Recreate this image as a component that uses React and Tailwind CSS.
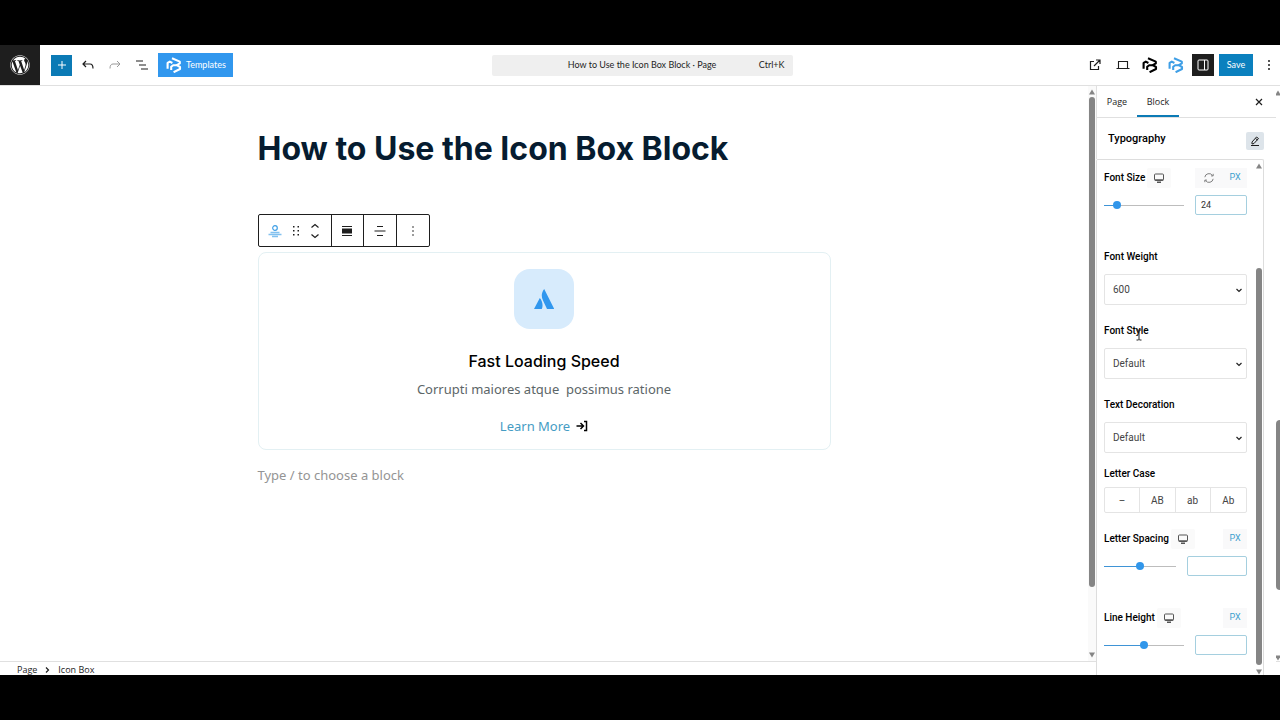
import { FaWordpress } from "react-icons/fa6";

const TriangleUp = () => (
  <svg viewBox="0 0 6 6" className="size-1.5 shrink-0 fill-[#858585]"><path d="M3 0.5 6 5.5H0z" /></svg>
);

const TriangleDown = () => (
  <svg viewBox="0 0 6 6" className="size-1.5 shrink-0 fill-[#858585]"><path d="M3 5.5 6 0.5H0z" /></svg>
);

const BrandLogo = ({ className }) => (
  <svg viewBox="0 0 16 16" className={className} fill="none" stroke="currentColor" strokeWidth="2.1" strokeLinejoin="round">
    <path d="M1.6 11.8V5.8L3.800 4.600 6.400 6" />
    <path d="M5.200 13V9.800L7.200 8.200H10.800" />
    <path d="M6 1.300 13.800 4.600V6.400L10.800 8.200 14 10V12L7.600 15.200" />
  </svg>
);

const DesktopIcon = () => (
  <svg viewBox="0 0 12 12" className="size-3" fill="none" stroke="#555" strokeWidth="1">
    <rect x="1.5" y="2" width="9" height="6.5" rx="1" />
    <path d="M2 8h8M4 10.2h4" strokeWidth="1.5" />
  </svg>
);

const Label = ({ children, htmlFor }) => (
  <label htmlFor={htmlFor} className="block text-[10px] font-medium leading-5 text-black">{children}</label>
);

const SelectField = ({ id, label, options, className }) => (
  <div className={className}>
    <Label htmlFor={id}>{label}</Label>
    <div className="relative mt-[7px]">
      <select id={id} className="block h-[31px] w-full appearance-none rounded-xs border border-[#e4e4e4] bg-white px-2 text-[10px] text-[#444]">
        {options.map((option) => <option key={option}>{option}</option>)}
      </select>
      <svg viewBox="0 0 8 8" className="pointer-events-none absolute right-1 top-3 size-2" fill="none" stroke="#222" strokeWidth="1.2"><path d="m1.5 3 2.5 2.5L6.5 3" /></svg>
    </div>
  </div>
);

const SliderField = ({ id, label, value, percent, reset, inputClass, className }) => (
  <div className={className}>
    <div className="flex h-5 items-center justify-between">
      <div className="flex items-center gap-0.5">
        <Label htmlFor={id}>{label}</Label>
        <button aria-label="Device" className="flex h-5 w-6 items-center justify-center rounded-xs bg-[#fafafa]"><DesktopIcon /></button>
      </div>
      <div className="flex h-5 items-center bg-[#f9f9fa]">
        {reset && (
          <button aria-label="Reset" className="flex w-7 justify-center">
            <svg viewBox="0 0 12 12" className="size-2.5" fill="none" stroke="#666" strokeWidth="1">
              <path d="M1 5a5 5 0 0 1 9-2.2M11 1v2.5H8.5M11 7a5 5 0 0 1-9 2.2M1 11V8.500H3.500" />
            </svg>
          </button>
        )}
        <button className="w-6 text-[9px] text-[#3ba0cf]">PX</button>
      </div>
    </div>
    <div className="mt-[7px] flex items-center gap-[11px]">
      <input
        type="range"
        aria-label={label}
        defaultValue={percent}
        style={{ backgroundImage: `linear-gradient(to right, #3f94d6 ${percent}%, #bdbdbd ${percent}%)` }}
        className="h-px min-w-0 flex-1 appearance-none [&::-webkit-slider-thumb]:size-2 [&::-webkit-slider-thumb]:appearance-none [&::-webkit-slider-thumb]:rounded-full [&::-webkit-slider-thumb]:bg-[#3196ea]"
      />
      <input id={id} defaultValue={value} className={`h-5 rounded-xs border border-[#a5cfdf] bg-white px-[5px] text-[9px] text-[#333] ${inputClass}`} />
    </div>
  </div>
);

const Header = () => (
  <header className="flex h-[41px] shrink-0 items-center justify-between border-b border-[#e0e0e0] font-['Lato',sans-serif]">
    <div className="flex flex-1 items-center">
      <a href="#" aria-label="WordPress" className="flex size-10 items-center justify-center bg-[#1e1e1e] text-white"><FaWordpress className="size-5" /></a>
      <button aria-label="Add block" className="ml-[11px] flex size-[21px] items-center justify-center bg-[#0b7ab5]">
        <svg viewBox="0 0 8 8" className="size-2" stroke="#fff"><path d="M4 0v8M0 4h8" /></svg>
      </button>
      <button aria-label="Undo" className="ml-2.5">
        <svg viewBox="0 0 12 12" className="size-3" fill="none" stroke="#1e1e1e" strokeWidth="1.2"><path d="M4 2 1 5l3 3M1 5h7q3 0 3 4.500" /></svg>
      </button>
      <button aria-label="Redo" className="ml-[15px]">
        <svg viewBox="0 0 12 12" className="size-3" fill="none" stroke="#999" strokeWidth="1"><path d="m8 2 3 3-3 3M11 5H4q-3 0-3 4.500" /></svg>
      </button>
      <button aria-label="Document overview" className="ml-[15px]">
        <svg viewBox="0 0 12 12" className="size-3" stroke="#1e1e1e" strokeWidth="1.2"><path d="M0 2h7M3 6h7M5 10h7" /></svg>
      </button>
      <button className="ml-2.5 flex h-6 w-[75px] items-center gap-1 bg-[#3197ee] pl-2 text-[9px] text-white"><BrandLogo className="size-4" />Templates</button>
    </div>
    <button className="ml-1 grid h-[21px] w-[301px] grid-cols-[1fr_auto_1fr] items-center rounded-xs bg-[#efefef] px-2 text-[9px] text-[#1e1e1e]">
      <span className="col-start-2">How to Use the Icon Box Block · Page</span>
      <span className="text-right">Ctrl+K</span>
    </button>
    <div className="flex flex-1 items-center justify-end">
      <a href="#" aria-label="View page" className="mr-[15px]">
        <svg viewBox="0 0 12 12" className="size-3" fill="none" stroke="#1e1e1e" strokeWidth="1.2"><path d="M5 2.500H1.500v8h8V7M7 1h4v4M11 1 5 7" /></svg>
      </a>
      <button aria-label="Preview" className="mr-3">
        <svg viewBox="0 0 14 12" className="h-3 w-3.5" fill="none" stroke="#1e1e1e" strokeWidth="1.1"><path d="M2.500 9V2.500h9V9M0.500 9.500h13" /></svg>
      </button>
      <button aria-label="Blocks" className="mr-2.5 text-black"><BrandLogo className="size-4" /></button>
      <button aria-label="Library" className="mr-2 text-[#3f9fe6]"><BrandLogo className="size-4" /></button>
      <button aria-label="Settings" className="mr-[5px] flex size-[22px] items-center justify-center bg-[#1e1e1e]">
        <svg viewBox="0 0 12 12" className="size-3" fill="none" stroke="#fff"><rect x="1" y="1" width="10" height="10" rx="1" /><path d="M7.500 1v10" /></svg>
      </button>
      <button className="h-[22px] w-[34px] bg-[#0b80be] text-[9px] text-white">Save</button>
      <button aria-label="Options" className="ml-3.5 mr-[9px]">
        <svg viewBox="0 0 4 12" className="h-3 w-1" fill="#1e1e1e"><circle cx="2" cy="2" r="1" /><circle cx="2" cy="6" r="1" /><circle cx="2" cy="10" r="1" /></svg>
      </button>
    </div>
  </header>
);

const BlockToolbar = () => (
  <div className="flex h-[33px] w-[172px] divide-x divide-[#1e1e1e] rounded-xs border border-[#1e1e1e]">
    <div className="flex w-[73px] items-center justify-between pl-[9px] pr-[11px]">
      <button aria-label="Icon Box">
        <svg viewBox="0 0 14 14" className="size-3.5" fill="none" stroke="#3f9fe6"><circle cx="7" cy="4" r="2.300" strokeWidth="1.200" /><path d="M2.500 8.500h9M0.500 10.500h13M4 12.500h6" strokeWidth="1.400" strokeOpacity=".65" /></svg>
      </button>
      <button aria-label="Drag">
        <svg viewBox="0 0 8 12" className="h-3 w-2" fill="#1e1e1e"><path d="M1 1h1.500v1.500H1zM5.500 1H7v1.500H5.500zM1 5h1.500v1.500H1zM5.500 5H7v1.500H5.500zM1 9h1.500v1.500H1zM5.500 9H7v1.500H5.500z" /></svg>
      </button>
      <button aria-label="Move">
        <svg viewBox="0 0 10 16" className="h-4 w-2.5" fill="none" stroke="#1e1e1e" strokeWidth="1.200"><path d="m1.500 4.500 3.500-3 3.500 3M1.500 11.500l3.500 3 3.500-3" /></svg>
      </button>
    </div>
    <button aria-label="Width" className="flex flex-1 items-center justify-center">
      <svg viewBox="0 0 10 12" className="h-3 w-2.5" fill="#1e1e1e"><path d="M0 1h10v1H0zM0 3.500h10v5H0zM0 10h10v1H0z" /></svg>
    </button>
    <button aria-label="Align" className="flex flex-1 items-center justify-center">
      <svg viewBox="0 0 12 12" className="size-3" fill="#1e1e1e"><path d="M3 1h6v1H3zM0.500 5.500h11v1H0.500zM3 10h6v1H3z" /></svg>
    </button>
    <button aria-label="More" className="flex flex-1 items-center justify-center">
      <svg viewBox="0 0 4 12" className="h-3 w-1" fill="#1e1e1e"><circle cx="2" cy="2" r=".8" /><circle cx="2" cy="6" r=".8" /><circle cx="2" cy="10" r=".8" /></svg>
    </button>
  </div>
);

const Canvas = () => (
  <main className="min-w-0 flex-1 px-6 pt-10 font-['Noto_Sans',sans-serif]">
    <div className="mx-auto w-full max-w-[573px]">
      <h1 className="font-['Inter',sans-serif] text-[32px] font-bold leading-[46px] text-[#061c30]">How to Use the Icon Box Block</h1>
      <div className="mt-[42px]"><BlockToolbar /></div>
      <section className="mt-[5px] flex flex-col items-center rounded-lg border border-[#e3f0f3] pb-[13px] pt-4">
        <div className="flex size-[60px] items-center justify-center rounded-2xl bg-[#d7ebfc]">
          <svg viewBox="0 0 20 20" className="size-5" fill="#3197ee"><path d="M10.200 0C7.500 3.500 7 7.500 9 11.500L13 20h7.200zM5.800 9 0 20h7.800C9.300 16.500 8.500 12 5.800 9z" /></svg>
        </div>
        <h2 className="mt-5 font-['Inter',sans-serif] text-[16px] font-medium leading-6 text-black">Fast Loading Speed</h2>
        <p className="mt-1.5 whitespace-pre text-[13px] leading-5 text-[#5c6668]">Corrupti maiores atque  possimus ratione</p>
        <a href="#" className="mt-[17px] flex items-center gap-1.5 text-[13px] leading-5 text-[#459cc4]">
          Learn More
          <svg viewBox="0 0 12 12" className="size-3" fill="none" stroke="#000" strokeWidth="1.500"><path d="M0.500 6H7M4.500 3l3 3-3 3M8 1.500h2.500v9H8" /></svg>
        </a>
      </section>
      <p className="mt-[15px] text-[13px] leading-5 text-[#949494]">Type / to choose a block</p>
    </div>
  </main>
);

const TypographyPanel = () => (
  <div className="flex min-h-0 w-[168px] flex-1 rounded-t-xs border border-b-0 border-[#ddd] bg-white">
    <div className="min-w-0 flex-1 overflow-hidden pl-[7px] pr-2 pt-2">
      <SliderField id="font-size" label="Font Size" value="24" percent={12} reset inputClass="w-[52px]" />
      <SelectField id="font-weight" label="Font Weight" options={["600", "400", "700"]} className="mt-8" />
      <div className="relative mt-4">
        <SelectField id="font-style" label="Font Style" options={["Default", "Italic"]} />
        <svg viewBox="0 0 6 12" className="pointer-events-none absolute left-8 top-2 h-3 w-1.5" fill="none" stroke="#222"><path d="M0.500 1h2l.5.500.5-.500h2M3 1.500v9M0.500 11h2l.5-.500.5.500h2" /></svg>
      </div>
      <SelectField id="text-decoration" label="Text Decoration" options={["Default", "Underline"]} className="mt-4" />
      <fieldset className="mt-[11px]">
        <legend className="text-[10px] font-medium leading-5 text-black">Letter Case</legend>
        <div className="mt-[3px] grid h-[26px] grid-cols-4 divide-x divide-[#e4e4e4] rounded-xs border border-[#e4e4e4] text-[10px] text-[#444]">
          <button>–</button>
          <button>AB</button>
          <button>ab</button>
          <button>Ab</button>
        </div>
      </fieldset>
      <SliderField id="letter-spacing" label="Letter Spacing" value="" percent={50} inputClass="w-[60px]" className="mt-4" />
      <SliderField id="line-height" label="Line Height" value="" percent={50} inputClass="w-[52px]" className="mt-8" />
    </div>
    <div className="flex w-2 flex-col items-center pt-[3px]">
      <TriangleUp />
      <div className="mt-[99px] w-1.5 flex-1 rounded-full bg-[#858585]" />
      <div className="mt-1"><TriangleDown /></div>
    </div>
  </div>
);

const Sidebar = () => (
  <aside className="flex w-[184px] shrink-0 font-['Roboto',sans-serif]">
    <div className="flex min-w-0 flex-1 flex-col">
      <div className="flex h-8 shrink-0 items-center justify-between border-b border-l border-[#e0e0e0] pr-[13px] font-['Open_Sans',sans-serif] text-[9px] text-[#1e1e1e]">
        <div className="flex h-full">
          <button className="w-10">Page</button>
          <button className="h-full w-[42px] border-b-2 border-[#0b7ab5] pt-0.5">Block</button>
        </div>
        <button aria-label="Close settings">
          <svg viewBox="0 0 8 8" className="size-2" stroke="#1e1e1e" strokeWidth="1.200"><path d="m1 1 6 6M7 1 1 7" /></svg>
        </button>
      </div>
      <div className="flex h-[41px] shrink-0 items-center justify-between border-l border-[#e0e0e0] pl-[11px] pr-3">
        <h3 className="text-[11px] font-medium leading-5 text-black">Typography</h3>
        <button aria-label="Edit typography" className="mt-1 flex size-[18px] items-center justify-center rounded-xs bg-[#dde4ea]">
          <svg viewBox="0 0 12 12" className="size-3" fill="none" stroke="#1e1e1e"><path d="M3 9V7l4.500-5 2 1.500L5 8.500zM6.500 3.500l2 1.500M2 10.500h8" /></svg>
        </button>
      </div>
      <TypographyPanel />
    </div>
    <div className="mb-[13px] flex w-1 flex-col items-center overflow-hidden border-b border-[#e0e0e0] pt-1">
      <TriangleUp />
      <div className="mt-[324px] h-[170px] w-1 rounded-l-full bg-[#858585]" />
      <div className="mt-auto"><TriangleDown /></div>
    </div>
  </aside>
);

export default function App() {
  return (
    <div className="flex h-screen flex-col bg-black py-[45px] font-['Open_Sans',sans-serif]">
      <div className="flex min-h-0 flex-1 flex-col overflow-hidden bg-white">
        <Header />
        <div className="flex min-h-0 flex-1">
          <div className="flex min-w-0 flex-1 flex-col">
            <div className="flex min-h-0 flex-1">
              <Canvas />
              <div className="flex w-2 flex-col items-center bg-[#fafafa] py-[3px]">
                <TriangleUp />
                <div className="mt-0.5 h-[490px] w-1.5 rounded-full bg-[#858585]" />
                <div className="mt-auto"><TriangleDown /></div>
              </div>
            </div>
            <footer className="flex h-3.5 shrink-0 items-center gap-2 border-t border-[#e0e0e0] px-[17px] pt-[3px] text-[9px] leading-[10px] text-[#1e1e1e]">
              <a href="#">Page</a>
              <svg viewBox="0 0 5 8" className="h-2 w-[5px]" fill="none" stroke="#1e1e1e" strokeWidth="1.200"><path d="m1 1.500 2.500 2.500L1 6.500" /></svg>
              <span>Icon Box</span>
            </footer>
          </div>
          <Sidebar />
        </div>
      </div>
    </div>
  );
}
